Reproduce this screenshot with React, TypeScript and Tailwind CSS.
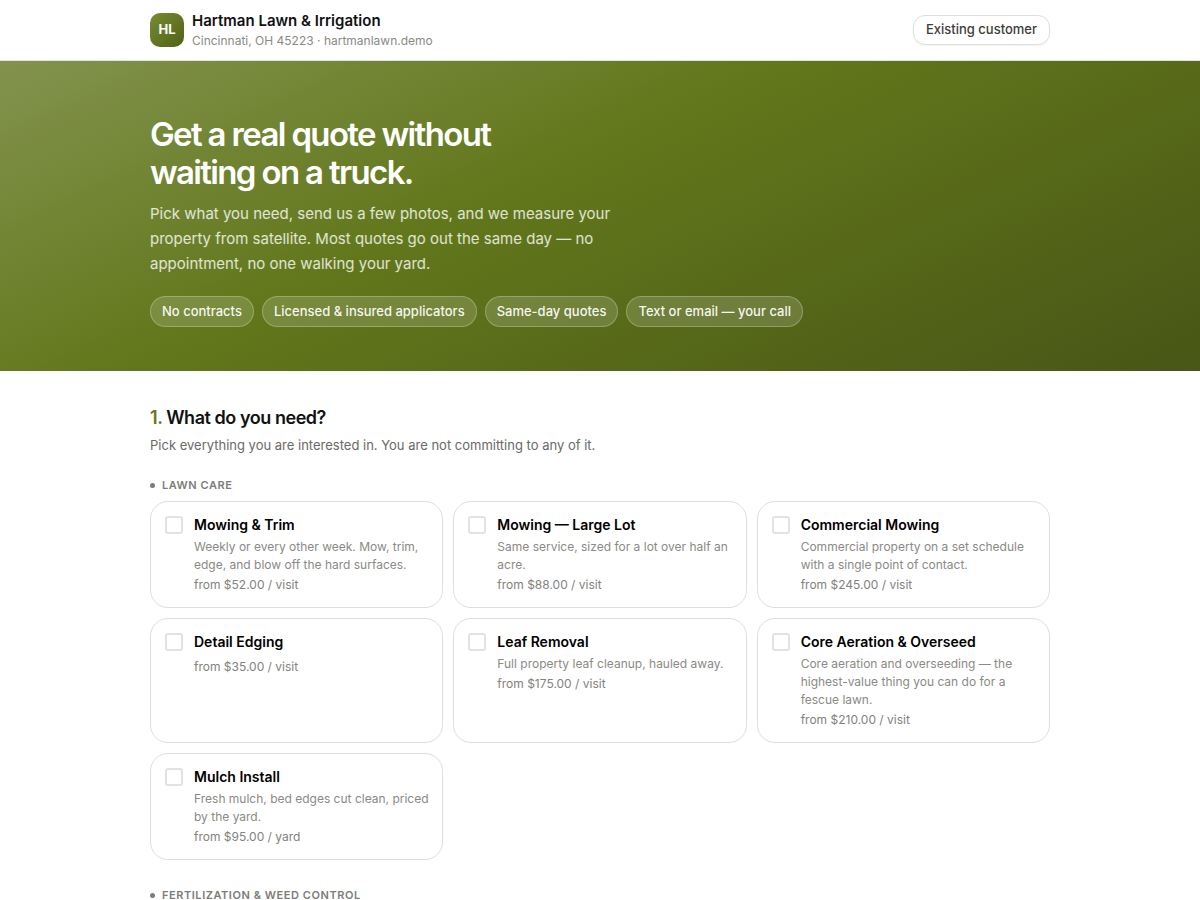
type Service = { name: string; desc?: string; price: string };

const lawnCare: Service[] = [
  { name: 'Mowing & Trim', desc: 'Weekly or every other week. Mow, trim, edge, and blow off the hard surfaces.', price: 'from $52.00 / visit' },
  { name: 'Mowing — Large Lot', desc: 'Same service, sized for a lot over half an acre.', price: 'from $88.00 / visit' },
  { name: 'Commercial Mowing', desc: 'Commercial property on a set schedule with a single point of contact.', price: 'from $245.00 / visit' },
  { name: 'Detail Edging', price: 'from $35.00 / visit' },
  { name: 'Leaf Removal', desc: 'Full property leaf cleanup, hauled away.', price: 'from $175.00 / visit' },
  { name: 'Core Aeration & Overseed', desc: 'Core aeration and overseeding — the highest-value thing you can do for a fescue lawn.', price: 'from $210.00 / visit' },
  { name: 'Mulch Install', desc: 'Fresh mulch, bed edges cut clean, priced by the yard.', price: 'from $95.00 / yard' },
];

const badges = ['No contracts', 'Licensed & insured applicators', 'Same-day quotes', 'Text or email — your call'];

function GroupHeading({ children }: { children: string }) {
  return (
    <h3 className="flex items-center gap-[7px] text-[11px] leading-4 font-semibold tracking-wider text-[#7c7c78] uppercase">
      <span className="size-[5px] rounded-full bg-[#7c7c78]" />
      {children}
    </h3>
  );
}

function ServiceCard({ name, desc, price }: Service) {
  return (
    <label className="flex cursor-pointer items-start gap-[11px] rounded-[18px] border border-[#dededb] bg-white py-3.5 pr-2.5 pl-3.5">
      <input type="checkbox" className="size-[18px] shrink-0 appearance-none rounded-[3px] border-2 border-[#e2e2df] bg-white checked:bg-[#64781c]" />
      <span className="flex flex-col">
        <span className="text-sm leading-[18px] font-semibold text-black">{name}</span>
        {desc && <span className="mt-1 text-xs leading-[18px] text-[#8a8a86]">{desc}</span>}
        <span className={desc ? 'mt-[3px] text-xs leading-4 text-[#82827e]' : 'mt-2 text-xs leading-4 text-[#82827e]'}>{price}</span>
      </span>
    </label>
  );
}

export default function App() {
  return (
    <div className="min-h-screen bg-white font-['Inter',sans-serif] text-[#111111]">
      <header className="border-b border-[#e4e4df] bg-white px-6 py-[11px]">
        <div className="mx-auto flex max-w-[900px] items-center justify-between">
          <div className="flex items-center gap-2">
            <div className="flex size-[34px] items-center justify-center rounded-[10px] bg-linear-to-br from-[#778c33] to-[#516216] text-[13px] font-bold text-white">HL</div>
            <div>
              <p className="text-[15px] leading-5 font-semibold">Hartman Lawn &amp; Irrigation</p>
              <p className="mt-0.5 text-xs leading-4 text-[#8a8a86]">Cincinnati, OH 45223 · hartmanlawn.demo</p>
            </div>
          </div>
          <button className="h-[30px] rounded-xl border border-[#dededb] px-3 text-[13px] font-medium text-[#3c3c38] shadow-xs">Existing customer</button>
        </div>
      </header>
      <section className="bg-[linear-gradient(155deg,#83934e_0%,#62771b_42%,#485616_100%)] px-6 pt-[54px] pb-11 text-white">
        <div className="mx-auto max-w-[900px]">
          <h1 className="max-w-[440px] text-[33px] leading-[38px] font-semibold tracking-tighter">Get a real quote without waiting on a truck.</h1>
          <p className="mt-2.5 max-w-[480px] text-[15px] leading-[25px] text-white/80">Pick what you need, send us a few photos, and we measure your property from satellite. Most quotes go out the same day — no appointment, no one walking your yard.</p>
          <ul className="mt-5 flex flex-wrap gap-2">
            {badges.map((b) => (
              <li key={b} className="rounded-full border border-white/25 bg-white/15 px-[11px] py-[6px] text-[13px] leading-[17px] font-medium text-white/95">{b}</li>
            ))}
          </ul>
        </div>
      </section>
      <main className="px-6 pt-[35px] pb-10">
        <div className="mx-auto max-w-[900px]">
          <h2 className="text-lg leading-6 font-semibold tracking-tight"><span className="text-[#64781c]">1.</span> What do you need?</h2>
          <p className="mt-[5px] mb-[22px] text-[13px] leading-5 text-[#6a6a66]">Pick everything you are interested in. You are not committing to any of it.</p>
          <GroupHeading>Lawn care</GroupHeading>
          <div className="mt-2 mb-[27px] grid grid-cols-1 gap-2.5 sm:grid-cols-2 md:grid-cols-3">
            {lawnCare.map((s) => <ServiceCard key={s.name} {...s} />)}
          </div>
          <GroupHeading>Fertilization &amp; weed control</GroupHeading>
        </div>
      </main>
    </div>
  );
}
